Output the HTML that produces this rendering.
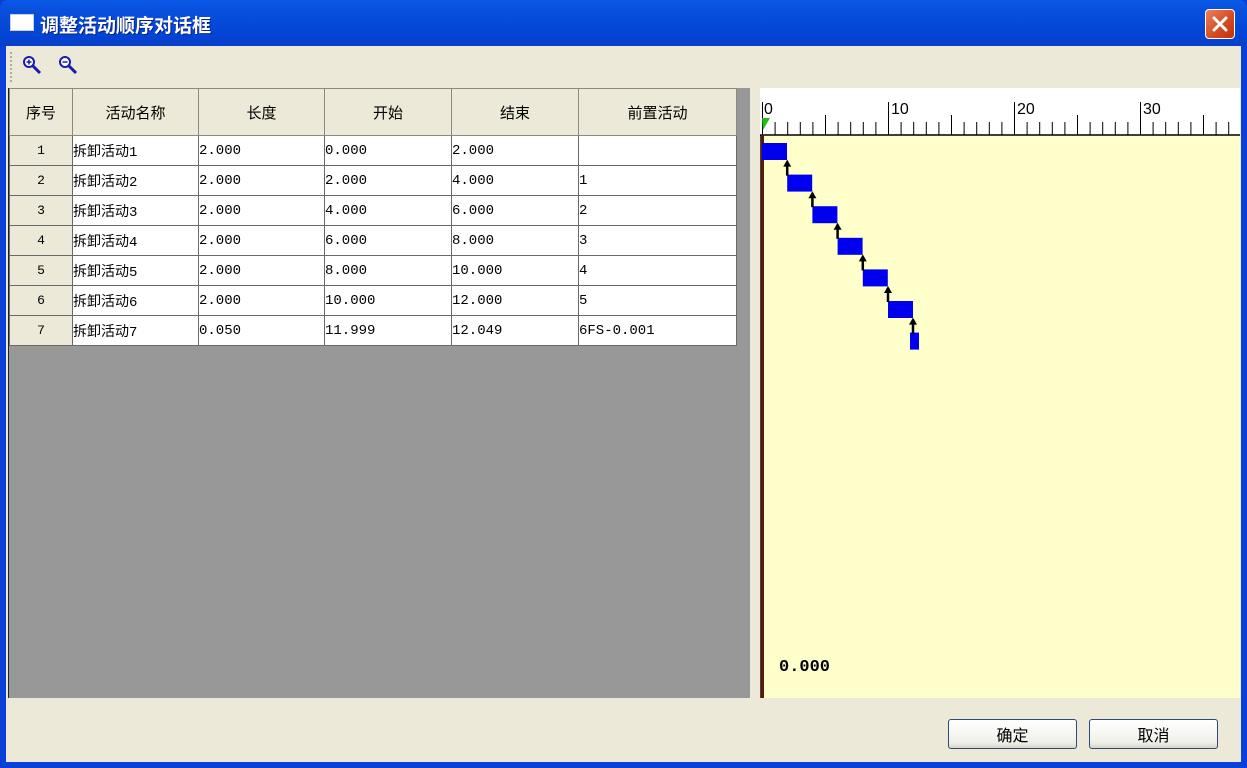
<!DOCTYPE html>
<html><head><meta charset="utf-8"><style>
*{margin:0;padding:0;box-sizing:border-box}
body{width:1247px;height:768px;overflow:hidden;background:#0a3fd8;font-family:"Liberation Sans","Noto Sans CJK SC",sans-serif;position:relative}
.abs{position:absolute}
#title{left:0;top:0;width:1247px;height:46px;background:linear-gradient(#0a5ae8,#0850dd 20%,#0343d4 80%,#0a3fc8);border-radius:8px 8px 0 0}
#title .t{left:40px;top:11px;color:#fff;font-weight:bold;font-size:19px;font-family:"Noto Sans CJK SC",sans-serif;text-shadow:1px 1px #0a1f80}
#close{left:1205px;top:9px;width:30px;height:30px;border:1px solid #fff;border-radius:4px;background:linear-gradient(135deg,#e88060,#d24a20 60%,#c03010)}
#client{left:6px;top:46px;width:1235px;height:716px;background:#ece9d8}
#grid{left:8px;top:88px;width:742px;height:610px;background:#989898;border-left:1px solid #222;overflow:hidden}
table{border-collapse:collapse;position:absolute;left:0;top:0}
td{border:1px solid #6a6a6a;height:30px;font-size:14px;font-family:"Liberation Mono","Noto Sans CJK SC",monospace;background:#fff;padding:0;white-space:nowrap;overflow:hidden}
td.h{background:#ece9d8;height:47px;text-align:center;font-family:"Noto Sans CJK SC",sans-serif;font-size:15px;border-color:#8a8a80}
td.n{background:#ece9d8;text-align:center;font-size:13px}
#gantt{left:760px;top:88px;width:480px;height:610px;background:#ffffcc;border-left:1px solid #444;border-top:1px solid #444}
.btn{width:129px;height:30px;border:1px solid #2d4b7a;border-radius:3px;background:linear-gradient(#fff,#f0f0ea 80%,#d8d5c8);font-size:16px;text-align:center;line-height:28px;font-family:"Noto Sans CJK SC",sans-serif}
</style></head><body>
<div class="abs" id="title">
 <div class="abs" style="left:10px;top:14px;width:24px;height:17px;background:#fff;border:1px solid #ccd"></div>
 <div class="abs t">调整活动顺序对话框</div>
 <div class="abs" id="close"><svg width="28" height="28" viewBox="0 0 28 28"><path d="M8 8L20 20M20 8L8 20" stroke="#fff" stroke-width="3" stroke-linecap="round"/></svg></div>
</div>
<div class="abs" id="client"></div>
<div class="abs" style="left:10px;top:52px;width:3px;height:30px;border-left:2px dotted #aaa"></div>
<svg class="abs" style="left:20px;top:54px" width="70" height="28" viewBox="0 0 70 28">
 <circle cx="9" cy="8" r="5" fill="#fff" stroke="#1a1ab0" stroke-width="2"/><path d="M6.5 8h5M9 5.5v5" stroke="#1a1ab0" stroke-width="1.5"/><path d="M13 12l7 7" stroke="#1a1ab0" stroke-width="3"/>
 <circle cx="45" cy="8" r="5" fill="#fff" stroke="#1a1ab0" stroke-width="2"/><path d="M42.5 8h5" stroke="#1a1ab0" stroke-width="1.5"/><path d="M49 12l7 7" stroke="#1a1ab0" stroke-width="3"/>
</svg>
<div class="abs" id="grid">
<table>
<tr><td class="h" style="width:63px">序号</td><td class="h" style="width:126px">活动名称</td><td class="h" style="width:126px">长度</td><td class="h" style="width:127px">开始</td><td class="h" style="width:127px">结束</td><td class="h" style="width:158px">前置活动</td></tr>
<tr><td class="n">1</td><td>拆卸活动1</td><td>2.000</td><td>0.000</td><td>2.000</td><td></td></tr>
<tr><td class="n">2</td><td>拆卸活动2</td><td>2.000</td><td>2.000</td><td>4.000</td><td>1</td></tr>
<tr><td class="n">3</td><td>拆卸活动3</td><td>2.000</td><td>4.000</td><td>6.000</td><td>2</td></tr>
<tr><td class="n">4</td><td>拆卸活动4</td><td>2.000</td><td>6.000</td><td>8.000</td><td>3</td></tr>
<tr><td class="n">5</td><td>拆卸活动5</td><td>2.000</td><td>8.000</td><td>10.000</td><td>4</td></tr>
<tr><td class="n">6</td><td>拆卸活动6</td><td>2.000</td><td>10.000</td><td>12.000</td><td>5</td></tr>
<tr><td class="n">7</td><td>拆卸活动7</td><td>0.050</td><td>11.999</td><td>12.049</td><td>6FS-0.001</td></tr>
</table>
</div>
<div class="abs" id="gantt">
<svg width="480" height="610" style="position:absolute;left:-1px;top:-1px">
<rect x="0" y="0" width="480" height="47" fill="#fff"/>
<line x1="0" y1="47" x2="480" y2="47" stroke="#000" stroke-width="1.5"/>
<g stroke="#000" stroke-width="1" id="ticks"></g>
<g font-family="Liberation Sans" font-size="16" fill="#000">
<text x="4" y="26">0</text><text x="131" y="26">10</text><text x="257" y="26">20</text><text x="383" y="26">30</text>
</g>
<path d="M2 30L10 30L3 42Z" fill="#22bb22"/>
<rect x="1" y="47" width="3" height="563" fill="#5a1a08"/>
<g fill="#0000ee" id="bars"></g>
<g id="arr"></g>
<text x="19" y="583" font-family="Liberation Mono" font-weight="bold" font-size="17">0.000</text>
</svg>
</div>
<div class="abs btn" style="left:948px;top:719px">确定</div>
<div class="abs btn" style="left:1089px;top:719px">取消</div>
<script>
var t=document.getElementById('ticks'),s='';
for(var k=0;k<=37;k++){var x=2.5+k*12.6;var y=k%10==0?14:(k%5==0?27:34);s+='<line x1="'+x+'" y1="'+y+'" x2="'+x+'" y2="47"/>';}
t.innerHTML=s;
var b='',a='';
for(var i=0;i<7;i++){var x=2+2*i*12.6,w=i==6?9:25;if(i==6)x=150;var y=55+31.6*i;b+='<rect x="'+x+'" y="'+y+'" width="'+w+'" height="17"/>';
if(i>0){var ax=x+(i==6?3:0);a+='<line x1="'+ax+'" y1="'+(y+1)+'" x2="'+ax+'" y2="'+(y-13)+'" stroke="#000" stroke-width="2.5"/><path d="M'+(ax-4)+' '+(y-8)+'L'+ax+' '+(y-15)+'L'+(ax+4)+' '+(y-8)+'Z"/>';}}
document.getElementById('bars').innerHTML=b;document.getElementById('arr').innerHTML=a;
</script>
</body></html>
